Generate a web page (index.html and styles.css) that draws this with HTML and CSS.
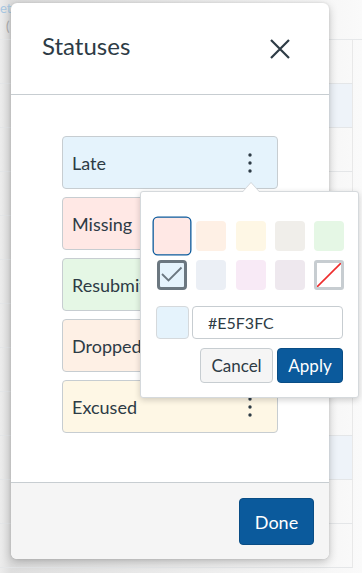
FILE: index.html
```html
<!DOCTYPE html>
<html lang="en">
<head>
    <meta charset="UTF-8">
    <meta name="viewport" content="width=device-width, initial-scale=1.0">
    <title>Statuses</title>
    <link rel="stylesheet" href="styles.css">
</head>
<body>
    <!-- gradebook behind the modal -->
    <div class="gradebook">
        <div class="gb-head">
            <span class="gb-link">et</span>
            <span class="gb-link">Tardiness Wiki</span>
            <span class="gb-link">Worksheet</span>
        </div>
        <div class="gb-sub">(</div>
        <div class="gb-row"></div>
        <div class="gb-row tint"></div>
        <div class="gb-row"></div>
        <div class="gb-row"></div>
        <div class="gb-row"></div>
        <div class="gb-row"></div>
        <div class="gb-row"></div>
        <div class="gb-row"></div>
        <div class="gb-row"></div>
        <div class="gb-row tint"></div>
        <div class="gb-row"></div>
        <div class="gb-row"></div>
    </div>

    <div class="modal">
        <div class="modal-head">
            <h2>Statuses</h2>
            <button class="close" aria-label="Close">
                <svg width="20" height="20" viewBox="0 0 20 20"><path d="M1 1 L19 19 M19 1 L1 19" stroke="#2d3b45" stroke-width="2.2" fill="none"/></svg>
            </button>
        </div>
        <div class="modal-body">
            <ul class="statuses">
                <li class="status late">Late <span class="kebab"><svg width="4" height="20" viewBox="0 0 4 20"><circle cx="2" cy="2" r="1.7"/><circle cx="2" cy="10" r="1.7"/><circle cx="2" cy="18" r="1.7"/></svg></span></li>
                <li class="status missing">Missing <span class="kebab"><svg width="4" height="20" viewBox="0 0 4 20"><circle cx="2" cy="2" r="1.7"/><circle cx="2" cy="10" r="1.7"/><circle cx="2" cy="18" r="1.7"/></svg></span></li>
                <li class="status resub">Resubmitted <span class="kebab"><svg width="4" height="20" viewBox="0 0 4 20"><circle cx="2" cy="2" r="1.7"/><circle cx="2" cy="10" r="1.7"/><circle cx="2" cy="18" r="1.7"/></svg></span></li>
                <li class="status dropped">Dropped <span class="kebab"><svg width="4" height="20" viewBox="0 0 4 20"><circle cx="2" cy="2" r="1.7"/><circle cx="2" cy="10" r="1.7"/><circle cx="2" cy="18" r="1.7"/></svg></span></li>
                <li class="status excused">Excused <span class="kebab"><svg width="4" height="20" viewBox="0 0 4 20"><circle cx="2" cy="2" r="1.7"/><circle cx="2" cy="10" r="1.7"/><circle cx="2" cy="18" r="1.7"/></svg></span></li>
            </ul>
        </div>
        <div class="modal-foot">
            <button class="btn primary done">Done</button>
        </div>
    </div>

    <!-- color picker popover -->
    <div class="popover">
        <div class="swatches">
            <span class="swatch selected" style="background:#ffe8e5"></span>
            <span class="swatch" style="background:#fef0e5"></span>
            <span class="swatch" style="background:#fef7e5"></span>
            <span class="swatch" style="background:#f0eeea"></span>
            <span class="swatch" style="background:#e5f7e5"></span>
            <span class="swatch checked" style="background:#e5f3fc">
                <svg width="24" height="24" viewBox="0 0 24 24"><path d="M2 11 L8.5 17.5 L21.5 4.5" stroke="#6b7780" stroke-width="1.8" fill="none"/></svg>
            </span>
            <span class="swatch" style="background:#ebeff5"></span>
            <span class="swatch" style="background:#f8eaf6"></span>
            <span class="swatch" style="background:#eee8ee"></span>
            <span class="swatch none">
                <svg width="24" height="24" viewBox="0 0 24 24"><path d="M0 24 L24 0" stroke="#ee2d2d" stroke-width="1.6"/></svg>
            </span>
        </div>
        <div class="hex-row">
            <span class="preview" style="background:#e5f3fc"></span>
            <input class="hex" type="text" value="#E5F3FC">
        </div>
        <div class="actions">
            <button class="btn">Cancel</button>
            <button class="btn primary">Apply</button>
        </div>
    </div>
</body>
</html>
```

FILE: styles.css
```css
* { margin: 0; padding: 0; box-sizing: border-box; }
body {
    width: 362px;
    height: 573px;
    overflow: hidden;
    background: #f2f2f2;
    font-family: Lato, "Open Sans", sans-serif;
    color: #2d3b45;
    position: relative;
}

/* background gradebook */
.gradebook {
    width: 100%;
    height: 100%;
    background: linear-gradient(to right, #ececec 0, #dedede 11px, #f7f7f7 329px, #fafafa 362px);
}
.gb-head {
    height: 18px;
    display: flex;
    gap: 40px;
    font-size: 13px;
    line-height: 16px;
}
.gb-link { color: #a8c8e2; }
.gb-sub {
    height: 22px;
    font-size: 13px;
    color: #aaa;
    padding-left: 6px;
    border-bottom: 1px solid #e6e8ea;
}
.gb-row {
    height: 44px;
    border-bottom: 1px solid #e4e6e8;
    border-right: 1px solid #e8e8e8;
    width: 353px;
}
.gb-row.tint { background: linear-gradient(to right, transparent 329px, #eef3f9 329px); }

/* modal */
.modal {
    position: absolute;
    top: 3px;
    left: 11px;
    width: 318px;
    height: 556px;
    background: #fff;
    border-radius: 6px;
    box-shadow: 0 3px 10px rgba(0,0,0,0.22), 0 0 3px rgba(0,0,0,0.1);
    display: flex;
    flex-direction: column;
    overflow: hidden;
}
.modal-head {
    height: 92px;
    border-bottom: 1px solid #c7cdd1;
    display: flex;
    align-items: center;
    justify-content: space-between;
    padding: 0 39px 0 31px;
}
.modal-head h2 {
    font-size: 24px;
    font-weight: 400;
    margin-top: -6px;
}
.close {
    border: 0;
    background: none;
    width: 20px;
    height: 20px;
    display: flex;
}
.modal-body {
    flex: 1;
    padding: 41px 0 0 51px;
}
.statuses {
    list-style: none;
    width: 216px;
    display: flex;
    flex-direction: column;
    gap: 8px;
}
.status {
    height: 53px;
    border: 1px solid #c7cdd1;
    border-radius: 4px;
    display: flex;
    align-items: center;
    justify-content: space-between;
    padding: 0 25px 0 9px;
    font-size: 18px;
    white-space: nowrap;
}
.kebab { display: flex; fill: #2d3b45; }
.late { background: #e5f3fc; }
.missing { background: #ffe8e5; }
.resub { background: #e5f7e5; }
.dropped { background: #fef0e5; }
.excused { background: #fef7e5; }

.modal-foot {
    height: 77px;
    background: #f5f5f5;
    border-top: 1px solid #c7cdd1;
    display: flex;
    justify-content: flex-end;
    padding: 15px 15px 0 0;
}
.btn {
    font-family: Lato, "Open Sans", sans-serif;
    font-size: 17px;
    height: 35px;
    padding: 0 10px;
    border-radius: 4px;
    border: 1px solid #c7cdd1;
    background: #f5f5f5;
    color: #2d3b45;
}
.btn.primary {
    background: #0b5a9c;
    border-color: #094d85;
    color: #fff;
}
.done {
    width: 75px;
    height: 47px;
    font-size: 18px;
}

/* popover */
.popover {
    position: absolute;
    top: 191px;
    left: 140px;
    width: 219px;
    height: 207px;
    background: #fff;
    border: 1px solid #d5d9dc;
    border-radius: 3px;
    box-shadow: 0 2px 6px rgba(0,0,0,0.18);
    padding: 29px 15px 0 15px;
}
.popover::before,
.popover::after {
    content: "";
    position: absolute;
    left: 101px;
    border: 9px solid transparent;
    border-top: 0;
}
.popover::before {
    top: -10px;
    border-bottom: 10px solid #d0d4d8;
}
.popover::after {
    top: -9px;
    border-bottom: 10px solid #fff;
}
.swatches {
    display: grid;
    grid-template-columns: repeat(5, 30px);
    grid-auto-rows: 30px;
    column-gap: 9.3px;
    row-gap: 9px;
    padding-left: 1px;
}
.swatch {
    border-radius: 4px;
    display: flex;
    align-items: center;
    justify-content: center;
}
.swatch.selected {
    transform: scale(1.3);
    border: 1px solid #0b5a9c;
}
.swatch.checked { border: 3px solid #6b7780; }
.swatch.none { border: 3px solid #c7cdd1; background: #fff; border-radius: 3px; }
.hex-row {
    display: flex;
    gap: 3px;
    margin-top: 16px;
}
.preview {
    width: 33px;
    height: 33px;
    border: 1px solid #d5d9dc;
    border-radius: 4px;
}
.hex {
    width: 151px;
    height: 33px;
    border: 1px solid #c7cdd1;
    border-radius: 4px;
    padding: 0 15px;
    font-family: Lato, "Open Sans", sans-serif;
    font-size: 16px;
    color: #2d3b45;
}
.actions {
    display: flex;
    justify-content: flex-end;
    gap: 4px;
    margin-top: 9px;
}
.actions .btn { width: 73px; }
.actions .btn.primary { width: 66px; }
```
